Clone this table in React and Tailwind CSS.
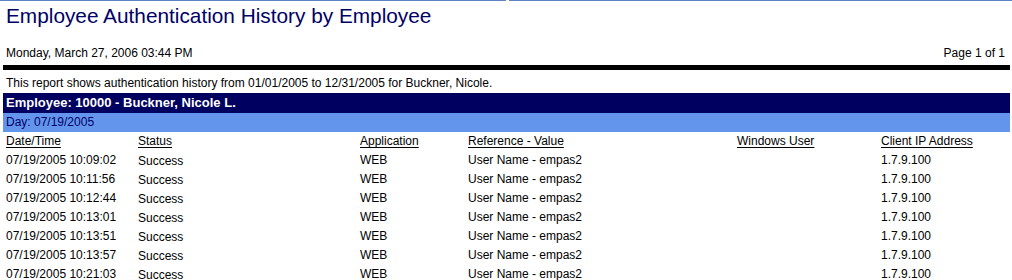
import React from 'react';

const rows = [
    '07/19/2005 10:09:02',
    '07/19/2005 10:11:56',
    '07/19/2005 10:12:44',
    '07/19/2005 10:13:01',
    '07/19/2005 10:13:51',
    '07/19/2005 10:13:57',
    '07/19/2005 10:21:03',
];

const cols = 'grid h-[19px] grid-cols-[132px_222px_108px_269px_144px_1fr] pl-[3px]';

export default function App() {
    return (
        <div className="w-[1012px] h-[280px] overflow-hidden bg-white text-black font-['Liberation_Sans',Arial,sans-serif]">
            {/* top rule */}
            <div className="flex gap-[3px]">
                <div className="h-px w-[506px] bg-[#6182c4]"></div>
                <div className="h-px flex-1 bg-[#6182c4]"></div>
            </div>

            <div className="px-[3px]">
                <h1 className="mt-[3px] pl-[3px] text-[20.8px] leading-[24px] text-[#000066]">
                    Employee Authentication History by Employee
                </h1>

                <div className="mt-[18px] flex justify-between pl-[3px] pr-[4px] text-[12px] leading-[14px]">
                    <span>Monday, March 27, 2006 03:44 PM</span>
                    <span>Page 1 of 1</span>
                </div>

                <div className="mt-[5px] h-[5px] w-[1007px] bg-black"></div>

                <p className="mt-[6px] pl-[3px] text-[12px] leading-[14px]">
                    This report shows authentication history from 01/01/2005 to 12/31/2005 for Buckner, Nicole.
                </p>

                <div className="mt-[3px] w-[1007px]">
                    <div className="h-[20px] bg-[#000060] pl-[3px] text-[13px] font-bold leading-[20px] text-white">
                        Employee: 10000 - Buckner, Nicole L.
                    </div>
                    <div className="h-[19px] bg-[#6495ed] pl-[3px] text-[12px] leading-[19px] text-[#000066]">
                        Day: 07/19/2005
                    </div>

                    <div className={`${cols} text-[12px] leading-[19px] underline underline-offset-[2px]`}>
                        <span>Date/Time</span>
                        <span>Status</span>
                        <span>Application</span>
                        <span>Reference - Value</span>
                        <span>Windows User</span>
                        <span>Client IP Address</span>
                    </div>

                    {rows.map((dt) => (
                        <div key={dt} className={`${cols} text-[12px] leading-[19px]`}>
                            <span>{dt}</span>
                            <span className="pt-px">Success</span>
                            <span>WEB</span>
                            <span>User Name - empas2</span>
                            <span></span>
                            <span>1.7.9.100</span>
                        </div>
                    ))}
                </div>
            </div>
        </div>
    );
}
